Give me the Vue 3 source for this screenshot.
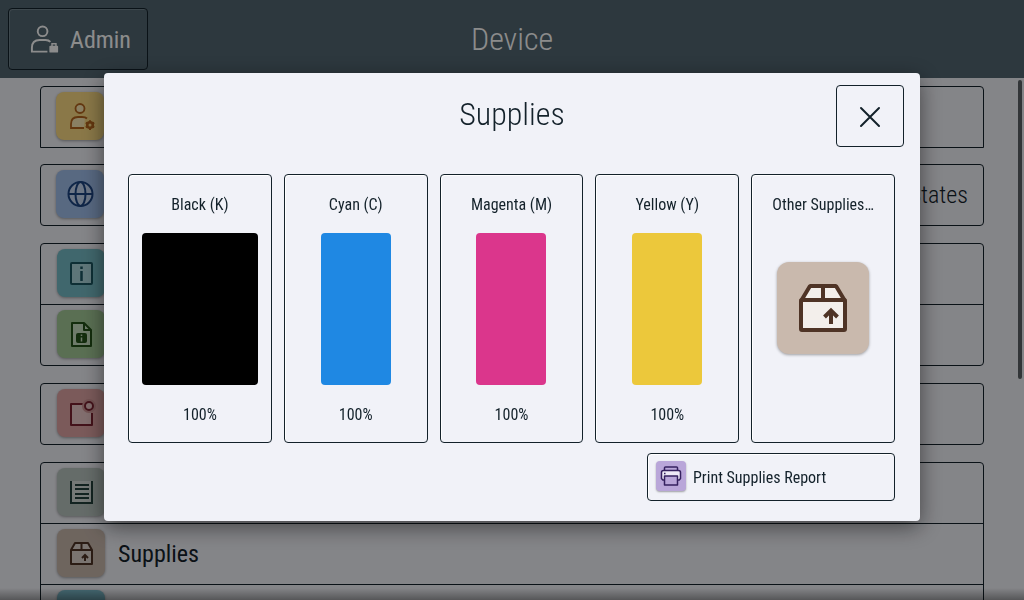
<script setup>
import { ref } from 'vue'

const open = ref(true)

// rows of the device menu, one array per bordered group
const groups = [
  [{ icon: 'user', tone: 'yellow' }],
  [{ icon: 'globe', tone: 'blue', value: 'United States' }],
  [{ icon: 'info', tone: 'teal' }, { icon: 'file', tone: 'green' }],
  [{ icon: 'notice', tone: 'red' }],
  [
    { icon: 'tray', tone: 'gray' },
    { icon: 'box', tone: 'brown', label: 'Supplies' },
    { icon: 'none', tone: 'cyan' }
  ]
]

const supplies = [
  { name: 'Black (K)', level: 100, cls: 'black' },
  { name: 'Cyan (C)', level: 100, cls: 'cyan-ink' },
  { name: 'Magenta (M)', level: 100, cls: 'magenta' },
  { name: 'Yellow (Y)', level: 100, cls: 'yellow-ink' }
]
</script>

<template>
  <div class="screen">
    <header class="topbar">
      <button class="admin-btn">
        <svg class="admin-icon" viewBox="0 0 32 32" fill="none" stroke="currentColor" stroke-width="2">
          <circle cx="14" cy="7" r="5" />
          <path d="M19 28H3v-4c0-5 3-8 8-8h6c3 0 4 .8 5 2" />
          <path stroke-width="1.500" d="M23.700 23v-3.200h4.100V23" />
          <rect x="21" y="22" width="9" height="7" rx="1" fill="currentColor" stroke="none" />
        </svg>
        <span>Admin</span>
      </button>
      <h1>Device</h1>
    </header>

    <main class="menu">
      <ul v-for="(group, g) in groups" :key="g" class="group">
        <li v-for="row in group" :key="row.icon" class="row">
          <span class="tile" :class="row.tone">
            <svg v-if="row.icon === 'user'" viewBox="0 0 32 32" fill="none" stroke="currentColor" stroke-width="1.800">
              <circle class="lit" cx="16" cy="8.500" r="4.500" />
              <path class="lit" stroke="none" d="M7 28v-4c0-4 2-7 7-7h7l-1 11z" />
              <path d="M20 28H7v-4c0-4 2-7 7-7h4c3 0 4 .5 5 1.500" />
              <circle cx="26" cy="25" r="2.800" stroke-width="2.600" />
              <path stroke-width="2" d="M26 20.200v2M26 28v2M21.800 22.600l1.700 1M28.500 26.400l1.700 1M21.800 27.400l1.700-1M28.500 23.600l1.700-1" />
            </svg>
            <svg v-else-if="row.icon === 'globe'" viewBox="0 0 32 32" fill="none" stroke="currentColor" stroke-width="2">
              <circle class="lit" cx="16.500" cy="16" r="12" />
              <ellipse cx="16.500" cy="16" rx="5" ry="12" />
              <path d="M4.500 16h24" />
            </svg>
            <svg v-else-if="row.icon === 'info'" viewBox="0 0 32 32" fill="none" stroke="currentColor" stroke-width="2">
              <rect class="lit" x="6" y="6" width="21" height="21" rx="1" />
              <path stroke-width="2.500" d="M16.500 14v10M16.500 9.500V12" />
            </svg>
            <svg v-else-if="row.icon === 'file'" viewBox="0 0 32 32" fill="none" stroke="currentColor" stroke-width="2" stroke-linejoin="round">
              <path class="lit" d="M7 5h12l7 7v16H7z" />
              <path d="M19 5v7h7" />
              <rect x="12" y="16" width="9" height="8" rx="1" fill="currentColor" />
              <path stroke="#c8dec0" stroke-width="1.500" d="M16.500 19.500v4M16.500 16.500V18" />
            </svg>
            <svg v-else-if="row.icon === 'notice'" viewBox="0 0 32 32" fill="none" stroke="currentColor" stroke-width="2">
              <path class="lit" stroke="none" d="M6 7h11l2 6 7 2v13H6z" />
              <path stroke-linejoin="round" d="M18 7H6v21h21V16" />
              <circle cx="24" cy="9" r="6" stroke="#cf9595" />
              <circle cx="24" cy="9" r="4" fill="#ecc6c6" />
            </svg>
            <svg v-else-if="row.icon === 'tray'" viewBox="0 0 32 32" fill="none" stroke="currentColor" stroke-width="2">
              <path class="lit" d="M6 5v22h21V5" />
              <path d="M10 9h14M10 13h14M10 18h14M10 22h14" />
            </svg>
            <svg v-else-if="row.icon === 'box'" viewBox="0 0 32 32" fill="none" stroke="currentColor" stroke-width="2" stroke-linejoin="round">
              <path class="lit" d="M6 13l4-7h13l4 7v14H6z" />
              <path d="M6 13h21M16.500 6v7" />
              <path stroke-linejoin="miter" d="M20 24v-6M17 21l3-3 3 3" />
            </svg>
          </span>
          <span v-if="row.label" class="label">{{ row.label }}</span>
          <span v-if="row.value" class="value">{{ row.value }}</span>
        </li>
      </ul>
      <div class="scrollbar"></div>
      <div class="fade"></div>
    </main>

    <div v-if="open" class="overlay">
      <section class="dialog" role="dialog" aria-labelledby="dialog-title">
        <div class="dialog-head">
          <h2 id="dialog-title">Supplies</h2>
          <button class="close-btn" aria-label="Close" @click="open = false">
            <svg viewBox="0 0 24 24" fill="none" stroke="currentColor" stroke-width="2" stroke-linecap="round">
              <path d="M3 3l18 18M21 3L3 21" />
            </svg>
          </button>
        </div>

        <div class="cards">
          <button v-for="item in supplies" :key="item.name" class="card">
            <span class="card-name">{{ item.name }}</span>
            <span class="ink" :class="item.cls"></span>
            <span>{{ item.level }}%</span>
          </button>
          <button class="card">
            <span class="card-name">Other Supplies…</span>
            <span class="other">
              <span class="big-tile">
                <svg viewBox="0 0 48 48" fill="#f3efeb" stroke="#4f3426" stroke-width="4">
                  <path d="M2 17L11 2h26l9 15z" stroke-linejoin="bevel" />
                  <rect x="2" y="16" width="44" height="30" rx="1" />
                  <path d="M24 2v14" />
                  <path fill="none" d="M32 40V27M25.500 33l6.500-6.500 6.500 6.500" />
                </svg>
              </span>
            </span>
          </button>
        </div>

        <button class="print-btn">
          <span class="print-tile">
            <svg viewBox="0 0 22 20" fill="none" stroke="#35215f" stroke-width="1.500" stroke-linejoin="round">
              <path d="M4.500 4V1.800Q4.500 1 5.500 1h11q1 0 1 .8V4" />
              <path fill="#eee9f7" d="M4.500 14H2.800L1.500 12.500V6.500Q1.500 4.500 3.500 4.500h15q2 0 2 2v6L19.200 14h-1.700" />
              <rect x="4.500" y="10" width="13" height="9" fill="#b9a6d9" />
              <path d="M4 7.500h1.500" />
            </svg>
          </span>
          <span class="print-label">Print Supplies Report</span>
        </button>
      </section>
    </div>
  </div>
</template>

<style>
body {
  background: #f1f2f8;
  overflow: hidden;
}
</style>

<style scoped>
.screen {
  height: 100vh;
  display: flex;
  flex-direction: column;
  font-family: 'Roboto Condensed', 'Liberation Sans Narrow', Roboto, sans-serif;
  color: #13212a;
}
button {
  font-family: inherit;
  color: inherit;
  background: transparent;
  border: 1px solid #13212a;
  border-radius: 4px;
  padding: 0;
  cursor: pointer;
}
h1,
h2 {
  margin: 0;
  font-size: 32px;
  line-height: 40px;
  font-weight: 300;
  text-align: center;
}
.topbar {
  flex: none;
  display: grid;
  grid-template-columns: 140px 1fr 140px;
  align-items: center;
  padding: 8px;
  background: #526671;
  color: #fff;
}
.admin-btn {
  height: 62px;
  display: flex;
  align-items: center;
  gap: 10px;
  padding: 2px 16px 0 20px;
  font-size: 24px;
  box-shadow: inset 1px 1px 0 #72838c;
  border-color: #13212a;
}
.admin-icon {
  width: 32px;
  height: 32px;
}
.menu {
  position: relative;
  flex: 1;
  min-height: 0;
  overflow: hidden;
  padding: 8px 40px 0;
}
.group {
  list-style: none;
  margin: 0 0 17px;
  padding: 0;
  border: 1px solid #13212a;
  border-radius: 4px;
}
.group:first-child {
  margin-bottom: 16px;
  border-radius: 4px 4px 0 0;
}
.row {
  display: flex;
  align-items: center;
  gap: 13px;
  height: 60px;
  box-sizing: border-box;
  padding: 0 15px 2px 16px;
  font-size: 24px;
  line-height: 28px;
}
.group:nth-child(-n + 2) .row {
  padding-left: 15px;
}
.row + .row {
  height: 61px;
  border-top: 1px solid #13212a;
}
.label,
.value {
  padding-top: 2px;
}
.value {
  margin-left: auto;
  font-weight: 300;
}
.tile {
  width: 48px;
  height: 48px;
  border-radius: 8px;
  display: flex;
  align-items: center;
  justify-content: center;
  box-shadow: 0 1px 3px rgba(0, 0, 0, 0.35);
}
.tile svg {
  width: 32px;
  height: 32px;
}
.lit {
  fill: rgba(255, 255, 255, 0.4);
}
.yellow {
  background: #fbdb83;
  color: #b5651d;
}
.blue {
  background: #a0bfec;
  color: #1d4583;
}
.teal {
  background: #76bcc6;
  color: #1b5661;
}
.green {
  background: #a4cb98;
  color: #245218;
}
.red {
  background: #e0a5a5;
  color: #7a2230;
}
.gray {
  background: #b9c5c0;
  color: #24413c;
}
.brown {
  background: #c9b8ac;
  color: #4f3426;
}
.cyan {
  background: #7cbccd;
}
.scrollbar {
  position: absolute;
  top: 2px;
  right: 2px;
  width: 4px;
  height: 299px;
  border-radius: 2px;
  background: #5c6266;
}
.fade {
  position: absolute;
  left: 0;
  right: 0;
  bottom: 0;
  height: 12px;
  background: linear-gradient(rgba(0, 0, 0, 0), rgba(0, 0, 0, 0.35));
}
.overlay {
  position: fixed;
  inset: 0;
  display: flex;
  align-items: center;
  padding: 0 104px 6px;
  background: rgba(0, 0, 0, 0.45);
}
.dialog {
  flex: 1;
  display: flex;
  flex-direction: column;
  padding: 12px 25px 20px 24px;
  background: #f1f2f8;
  border-radius: 4px;
  box-shadow: 0 6px 22px rgba(0, 0, 0, 0.5);
}
.dialog-head {
  display: grid;
  grid-template-columns: 1fr 68px;
  margin-right: -9px;
  margin-bottom: 27px;
}
.dialog-head h2 {
  padding: 9px 0 0 60px;
}
.close-btn {
  height: 62px;
  display: flex;
  align-items: center;
  justify-content: center;
  padding-top: 2px;
}
.close-btn svg {
  width: 24px;
  height: 24px;
}
.cards {
  display: grid;
  grid-template-columns: repeat(5, 1fr);
  gap: 12px;
}
.card {
  min-width: 0;
  height: 269px;
  display: flex;
  flex-direction: column;
  align-items: center;
  justify-content: space-between;
  padding: 19px 13px 16px;
  font-size: 16px;
  line-height: 22px;
  box-shadow: inset 1px 1px 0 #fff;
}
.card-name {
  white-space: nowrap;
}
.ink {
  flex: none;
  width: 70px;
  height: 152px;
  margin-bottom: 2px;
  border-radius: 4px;
}
.black {
  width: 100%;
  background: #000;
}
.cyan-ink {
  background: #1f88e3;
}
.magenta {
  background: #db368c;
}
.yellow-ink {
  background: #ecc83b;
}
.other {
  flex: 1;
  display: flex;
  align-items: center;
  padding-bottom: 26px;
}
.big-tile {
  width: 92px;
  height: 92px;
  border-radius: 12px;
  display: flex;
  align-items: center;
  justify-content: center;
  background: #c9b9ad;
  box-shadow: 0 1px 3px rgba(0, 0, 0, 0.35);
}
.big-tile svg {
  width: 48px;
  height: 48px;
}
.print-btn {
  align-self: flex-end;
  width: 248px;
  height: 48px;
  margin-top: 10px;
  display: flex;
  align-items: center;
  gap: 7px;
  padding: 0 8px 2px;
  font-size: 16px;
  box-shadow: inset 1px 1px 0 #fff;
}
.print-label {
  padding-top: 2px;
}
.print-tile {
  width: 30px;
  height: 30px;
  border-radius: 4px;
  display: flex;
  align-items: center;
  justify-content: center;
  background: #b9a6d9;
  box-shadow: 0 1px 2px rgba(0, 0, 0, 0.35);
}
.print-tile svg {
  width: 22px;
  height: 20px;
}
</style>
